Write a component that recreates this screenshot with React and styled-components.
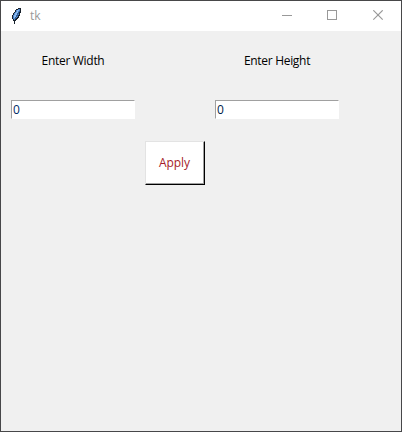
import React from "react";
import styled, { createGlobalStyle } from "styled-components";

const GlobalStyle = createGlobalStyle`
  * { box-sizing: border-box; }
  body { margin: 0; overflow: hidden; }
  button, input { font: inherit; letter-spacing: inherit; border-radius: 0; margin: 0; }
`;

const Window = styled.div`
  width: 402px;
  height: 432px;
  display: flex;
  flex-direction: column;
  border: 1px solid #474749;
  background: #f0f0f0;
  font-family: "Open Sans", "Noto Sans", sans-serif;
  font-size: 12px;
  line-height: 16px;
  letter-spacing: -0.3px;
  color: #000;
`;

const TitleBar = styled.header`
  height: 30px;
  flex: none;
  display: flex;
  align-items: center;
  padding-left: 10px;
  background: #fff;
`;

const Title = styled.span`
  flex: 1;
  margin-left: 8px;
  color: #999;
  letter-spacing: 0;
`;

const WindowControl = styled.button`
  width: 45px;
  height: 30px;
  padding: 0 0 2px;
  display: flex;
  align-items: center;
  justify-content: center;
  border: 0;
  background: transparent;

  &:last-child { width: 46px; }
`;

const Form = styled.main`
  display: grid;
  grid-template-columns: 124px 60px 124px;
  grid-template-rows: 49px 41px 44px;
  column-gap: 10px;
  padding: 20px 10px 0;
`;

const Label = styled.label`
  grid-column: ${(p) => p.$column};
  grid-row: 1;
  height: 20px;
  display: flex;
  align-items: center;
  justify-content: center;
  white-space: nowrap;
`;

const Entry = styled.input`
  grid-column: ${(p) => p.$column};
  grid-row: 2;
  width: 124px;
  height: 19px;
  padding: 0 1px;
  border: 1px solid;
  border-color: #a0a0a0 #fff #fff #a0a0a0;
  background: #fff;
  color: ${(p) => p.$color};
  outline: none;
`;

const ApplyButton = styled.button`
  grid-column: 2;
  grid-row: 3;
  padding: 0 1px 0 0;
  border: 1px solid;
  border-color: #e3e3e3 #000 #000 #e3e3e3;
  box-shadow: inset -1px -1px #a0a0a0;
  background: #fff;
  color: #a51c2a;
  letter-spacing: -0.1px;
`;

const Feather = () => (
  <svg width="11" height="16" viewBox="0 0 11 16" shapeRendering="crispEdges">
    <path d="M7 0H10V5H9V8H8V10H7V11H6V12H5V13H4V16H3V13H2V11H1V7H2V5H3V4H4V2H5V1H7Z" fill="#18212c" />
    <path d="M7 1H9V4H8V7H7V9H6V10H5V11H4V12H3V11H2V7H3V5H4V4H5V2H7Z" fill="#4b83c8" />
    <path d="M6 2H8V3H7V5H6V7H5V9H4V10H3V7H4V5H5V4H6Z" fill="#8bbaf0" />
    <path d="M8 3H9V4H8V6H7V8H6V9H5V11H4V9H5V7H6V5H7V4H8Z" fill="#315f9b" />
  </svg>
);

const Glyph = ({ d, crisp, weight = 1 }) => (
  <svg
    width="11"
    height="11"
    viewBox="0 0 11 11"
    fill="none"
    stroke="#999"
    strokeWidth={weight}
    shapeRendering={crisp ? "crispEdges" : "auto"}
  >
    <path d={d} />
  </svg>
);

export default function App() {
  return (
    <>
      <GlobalStyle />
      <Window>
        <TitleBar>
          <Feather />
          <Title>tk</Title>
          <WindowControl aria-label="Minimize"><Glyph crisp d="M0 5.5H10" /></WindowControl>
          <WindowControl aria-label="Maximize"><Glyph crisp d="M.5 .5H9.5V9.5H.5Z" /></WindowControl>
          <WindowControl aria-label="Close"><Glyph weight={1.2} d="M.3 .3L9.7 9.7M9.7 .3L.3 9.7" /></WindowControl>
        </TitleBar>
        <Form>
          <Label $column={1} htmlFor="width">Enter Width</Label>
          <Label $column={3} htmlFor="height">Enter Height</Label>
          <Entry id="width" $column={1} $color="#002a66" defaultValue="0" />
          <Entry id="height" $column={3} $color="#001b4a" defaultValue="0" />
          <ApplyButton>Apply</ApplyButton>
        </Form>
      </Window>
    </>
  );
}
